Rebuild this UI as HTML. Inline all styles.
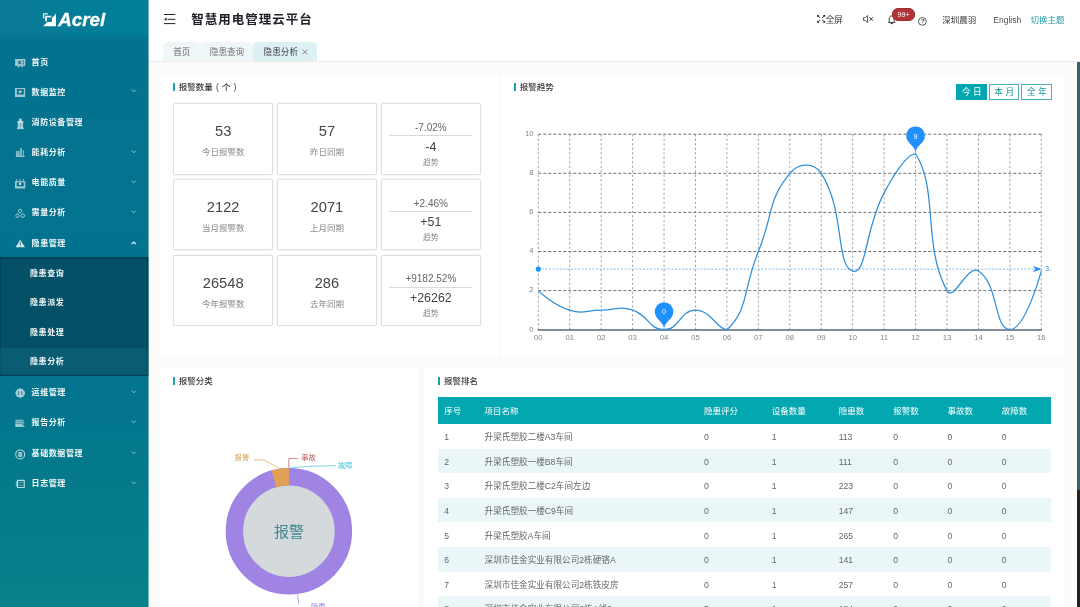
<!DOCTYPE html>
<html lang="zh-CN"><head><meta charset="utf-8"><title>智慧用电管理云平台</title>
<style>
html,body{margin:0;padding:0}
body{width:1080px;height:607px;overflow:hidden;position:relative;background:#fbfbfa;font-family:"Liberation Sans","Noto Sans CJK SC",sans-serif;-webkit-font-smoothing:antialiased}
.t{position:absolute;white-space:nowrap;display:block}
.b{position:absolute;box-sizing:border-box}
svg{position:absolute;overflow:visible}
</style></head><body><div id="app" style="position:absolute;left:0;top:0;width:1080px;height:607px;overflow:hidden;will-change:transform">
<div class="b" id="sidebar" style="left:0;top:0;width:148px;height:607px;background:linear-gradient(180deg,#03728f 0%,#03728f 6%,#02748e 64%,#047b8a 83%,#09818a 100%)">
<div class="b" style="left:0px;top:0px;width:148px;height:40px;background:linear-gradient(90deg,#0a7a96,#007f98);-webkit-mask-image:linear-gradient(180deg,#000 0,#000 78%,transparent 100%);mask-image:linear-gradient(180deg,#000 0,#000 78%,transparent 100%)"></div>
<svg style="left:38px;top:8px" width="40" height="24" viewBox="0 0 1012 607"><path d="M455 140L350 262V352H232L130 462H455Z" fill="#fff"/><path d="M125 130H252V166H160V264H125Z" fill="#fff" opacity="0.85"/><path d="M180 196H336V242H228V336H180Z" fill="#fff" opacity="0.9"/></svg>
<span class="t" style="left:58.2px;top:7.80px;line-height:24px;font-size:18.8px;color:#fff;font-weight:700;font-style:italic;-webkit-text-stroke:0.3px #fff;">Acrel</span>
<span class="t" style="left:31.6px;top:54.75px;line-height:16px;font-size:8.0px;color:rgba(255,255,255,0.95);font-weight:700;letter-spacing:0.58px;">首页</span>
<span class="t" style="left:31.6px;top:84.50px;line-height:16px;font-size:8.0px;color:rgba(255,255,255,0.95);font-weight:700;letter-spacing:0.58px;">数据监控</span>
<svg style="left:131.4px;top:89.4px;opacity:0.6" width="5.4" height="4" viewBox="0 0 5.4 4"><path d="M0.5 0.6L2.7 2.8L4.9 0.6" fill="none" stroke="#fff" stroke-width="1"/></svg>
<span class="t" style="left:31.6px;top:114.65px;line-height:16px;font-size:8.0px;color:rgba(255,255,255,0.95);font-weight:700;letter-spacing:0.58px;">消防设备管理</span>
<span class="t" style="left:31.6px;top:144.80px;line-height:16px;font-size:8.0px;color:rgba(255,255,255,0.95);font-weight:700;letter-spacing:0.58px;">能耗分析</span>
<svg style="left:131.4px;top:149.8px;opacity:0.6" width="5.4" height="4" viewBox="0 0 5.4 4"><path d="M0.5 0.6L2.7 2.8L4.9 0.6" fill="none" stroke="#fff" stroke-width="1"/></svg>
<span class="t" style="left:31.6px;top:174.95px;line-height:16px;font-size:8.0px;color:rgba(255,255,255,0.95);font-weight:700;letter-spacing:0.58px;">电能质量</span>
<svg style="left:131.4px;top:179.9px;opacity:0.6" width="5.4" height="4" viewBox="0 0 5.4 4"><path d="M0.5 0.6L2.7 2.8L4.9 0.6" fill="none" stroke="#fff" stroke-width="1"/></svg>
<span class="t" style="left:31.6px;top:204.95px;line-height:16px;font-size:8.0px;color:rgba(255,255,255,0.95);font-weight:700;letter-spacing:0.58px;">需量分析</span>
<svg style="left:131.4px;top:209.9px;opacity:0.6" width="5.4" height="4" viewBox="0 0 5.4 4"><path d="M0.5 0.6L2.7 2.8L4.9 0.6" fill="none" stroke="#fff" stroke-width="1"/></svg>
<span class="t" style="left:31.6px;top:235.65px;line-height:16px;font-size:8.0px;color:rgba(255,255,255,0.95);font-weight:700;letter-spacing:0.58px;">隐患管理</span>
<svg style="left:131.4px;top:240.6px;opacity:0.95" width="5.4" height="4" viewBox="0 0 5.4 4"><path d="M0.5 3.2L2.7 1L4.9 3.2" fill="none" stroke="#fff" stroke-width="1.1"/></svg>
<span class="t" style="left:31.6px;top:384.65px;line-height:16px;font-size:8.0px;color:rgba(255,255,255,0.95);font-weight:700;letter-spacing:0.58px;">运维管理</span>
<svg style="left:131.4px;top:389.6px;opacity:0.6" width="5.4" height="4" viewBox="0 0 5.4 4"><path d="M0.5 0.6L2.7 2.8L4.9 0.6" fill="none" stroke="#fff" stroke-width="1"/></svg>
<span class="t" style="left:31.6px;top:414.70px;line-height:16px;font-size:8.0px;color:rgba(255,255,255,0.95);font-weight:700;letter-spacing:0.58px;">报告分析</span>
<svg style="left:131.4px;top:419.7px;opacity:0.6" width="5.4" height="4" viewBox="0 0 5.4 4"><path d="M0.5 0.6L2.7 2.8L4.9 0.6" fill="none" stroke="#fff" stroke-width="1"/></svg>
<span class="t" style="left:31.6px;top:445.55px;line-height:16px;font-size:8.0px;color:rgba(255,255,255,0.95);font-weight:700;letter-spacing:0.58px;">基础数据管理</span>
<svg style="left:131.4px;top:450.5px;opacity:0.6" width="5.4" height="4" viewBox="0 0 5.4 4"><path d="M0.5 0.6L2.7 2.8L4.9 0.6" fill="none" stroke="#fff" stroke-width="1"/></svg>
<span class="t" style="left:31.6px;top:475.50px;line-height:16px;font-size:8.0px;color:rgba(255,255,255,0.95);font-weight:700;letter-spacing:0.58px;">日志管理</span>
<svg style="left:131.4px;top:480.5px;opacity:0.6" width="5.4" height="4" viewBox="0 0 5.4 4"><path d="M0.5 0.6L2.7 2.8L4.9 0.6" fill="none" stroke="#fff" stroke-width="1"/></svg>
<svg style="left:0;top:0" width="148" height="607" viewBox="0 0 148 607">
<rect x="15.1" y="59" width="10.2" height="6.9" fill="rgba(255,255,255,0.62)"/><circle cx="19.9" cy="62.4" r="1.9" fill="rgba(3,100,130,0.7)"/><rect x="22.6" y="60.3" width="1.3" height="4.3" fill="rgba(3,100,130,0.7)"/><rect x="21.3" y="61.9" width="1.6" height="1" fill="rgba(255,255,255,0.85)"/><path d="M17.5 65.9L18.6 68L19.7 65.9ZM20.9 65.9L22 68L23.1 65.9Z" fill="rgba(255,255,255,0.62)"/>
<path d="M15 87.9H25.1V96.9H15ZM16.9 89.1V94.4H23.8V89.1Z" fill="rgba(255,255,255,0.62)" fill-rule="evenodd"/><path d="M21.4 89.6L17.9 92.2H19.9L18.9 94.1L22.4 91.4H20.4Z" fill="rgba(255,255,255,0.85)"/>
<ellipse cx="20.4" cy="120.3" rx="1.6" ry="2.1" fill="rgba(255,255,255,0.62)"/><rect x="17.3" y="120.9" width="6.2" height="1.5" rx="0.5" fill="rgba(255,255,255,0.62)"/><rect x="17.6" y="122" width="5.5" height="6" fill="rgba(255,255,255,0.62)"/><rect x="17" y="127.7" width="6.8" height="1.5" fill="rgba(255,255,255,0.62)"/><rect x="20" y="123.2" width="0.7" height="3.4" fill="rgba(3,100,130,0.7)" opacity="0.6"/>
<rect x="15.9" y="150.9" width="3.9" height="5.2" fill="rgba(255,255,255,0.48)"/><rect x="20.1" y="148" width="1.9" height="8.1" fill="rgba(255,255,255,0.48)"/><rect x="22.8" y="150" width="1.2" height="6.1" fill="rgba(255,255,255,0.48)"/><rect x="15.8" y="155.9" width="9" height="1" fill="rgba(255,255,255,0.62)"/>
<path d="M15 181.3H25.3V188.4H15ZM16.7 182.5V186.2H23.8V182.5Z" fill="rgba(255,255,255,0.62)" fill-rule="evenodd"/><rect x="16.1" y="178.9" width="1.2" height="2.6" fill="rgba(255,255,255,0.48)"/><rect x="19.6" y="178.9" width="1.2" height="2.6" fill="rgba(255,255,255,0.48)"/><rect x="22.9" y="178.9" width="1.2" height="2.6" fill="rgba(255,255,255,0.48)"/><rect x="19.1" y="183" width="2" height="1.9" fill="rgba(255,255,255,0.85)"/>
<g fill="none" stroke="rgba(255,255,255,0.7)" stroke-width="0.85"><circle cx="20.1" cy="210.9" r="1.75"/><circle cx="17.6" cy="215.7" r="1.75"/><circle cx="22.8" cy="215.7" r="1.75"/></g>
<path d="M20.2 239.7L25 247.3H15.6Z" fill="rgba(255,255,255,0.85)"/><path d="M20.25 241.8V245" stroke="#2b6f80" stroke-width="0.9"/><circle cx="20.25" cy="246.1" r="0.5" fill="#2b6f80"/>
<ellipse cx="20.2" cy="393.1" rx="4.9" ry="4.5" fill="rgba(255,255,255,0.62)"/><rect x="19.85" y="388" width="0.8" height="10.3" fill="rgba(255,255,255,0.48)"/><rect x="18.15" y="391.2" width="1.05" height="3.9" fill="rgba(3,100,130,0.7)"/><rect x="21.15" y="391.2" width="1.05" height="3.9" fill="rgba(3,100,130,0.7)"/>
<path d="M15.3 419.5H23.2L24.7 424.2H15.3Z" fill="rgba(255,255,255,0.3)"/><path d="M15.6 420.6H22.6M15.6 422.5H23.2" stroke="rgba(255,255,255,0.5)" stroke-width="0.9" stroke-dasharray="1.3 0.7"/><rect x="15.3" y="424.1" width="6.8" height="2.9" fill="rgba(255,255,255,0.62)"/><path d="M22.4 427V423.8L24.9 427Z" fill="rgba(255,255,255,0.62)"/>
<circle cx="20.2" cy="454.4" r="4.45" fill="none" stroke="rgba(255,255,255,0.7)" stroke-width="1.1"/><rect x="18.2" y="451.9" width="4" height="5" rx="0.9" fill="rgba(255,255,255,0.62)"/><rect x="18.2" y="454.2" width="4" height="0.5" fill="rgba(3,100,130,0.7)" opacity="0.6"/>
<path d="M17 479.8H24.8V488H17ZM18.1 480.9V486.9H23.7V480.9Z" fill="rgba(255,255,255,0.72)" fill-rule="evenodd"/><rect x="15.8" y="481" width="1.3" height="5.6" fill="rgba(255,255,255,0.48)"/><rect x="18.6" y="482" width="4.8" height="0.7" fill="rgba(255,255,255,0.48)"/><rect x="18.6" y="484.8" width="4.8" height="0.7" fill="rgba(255,255,255,0.48)"/>
</svg>
<div class="b" style="left:0px;top:257px;width:148px;height:118.5px;background:rgba(5,40,60,0.47);box-shadow:inset 0 1.5px 2px rgba(0,30,40,0.35),inset 0 -1.5px 2px rgba(0,30,40,0.35)"></div>
<div class="b" style="left:0px;top:348.4px;width:148px;height:27.1px;background:rgba(50,160,180,0.15)"></div>
<span class="t" style="left:30.0px;top:265.55px;line-height:16px;font-size:8.0px;color:rgba(255,255,255,0.95);font-weight:700;letter-spacing:0.58px;">隐患查询</span>
<span class="t" style="left:30.0px;top:294.75px;line-height:16px;font-size:8.0px;color:rgba(255,255,255,0.95);font-weight:700;letter-spacing:0.58px;">隐患派发</span>
<span class="t" style="left:30.0px;top:324.65px;line-height:16px;font-size:8.0px;color:rgba(255,255,255,0.95);font-weight:700;letter-spacing:0.58px;">隐患处理</span>
<span class="t" style="left:30.0px;top:353.90px;line-height:16px;font-size:8.0px;color:rgba(255,255,255,0.95);font-weight:700;letter-spacing:0.58px;">隐患分析</span>
</div>
<div class="b" style="left:148px;top:0px;width:932px;height:37px;background:#fff"></div>
<svg style="left:163.7px;top:14px" width="12" height="10" viewBox="0 0 12 10"><path d="M0 0.5H11.3M3.5 5.3H11.3M0 9.6H11.3" stroke="#222" stroke-width="1"/><path d="M0 5.3L2.5 3.6V7Z" fill="#222"/></svg>
<span class="t" style="left:191.3px;top:9.60px;line-height:20px;font-size:12.5px;color:#20222a;font-weight:700;letter-spacing:1.0px;">智慧用电管理云平台</span>
<svg style="left:816.5px;top:15.4px" width="8.2" height="7.7" viewBox="0 0 8.4 8"><path d="M0.7 0.7L3.1 3M7.7 0.7L5.3 3M0.7 7.3L3.1 5M7.7 7.3L5.3 5" stroke="#222" stroke-width="1"/><path d="M0 0H2.4L0 2.4ZM8.4 0H6L8.4 2.4ZM0 8H2.4L0 5.6ZM8.4 8H6L8.4 5.6Z" fill="#222"/></svg>
<span class="t" style="left:825.7px;top:11.60px;line-height:16px;font-size:8.6px;color:#333;">全屏</span>
<svg style="left:863px;top:15px" width="10.5" height="8" viewBox="0 0 10.5 8"><path d="M0.5 2.6H2.2L4.6 0.5V7.5L2.2 5.4H0.5Z" fill="none" stroke="#333" stroke-width="0.8" stroke-linejoin="round"/><path d="M6.6 2.3L9.9 5.7M9.9 2.3L6.6 5.7" stroke="#2a2a2a" stroke-width="0.95"/></svg>
<svg style="left:888.1px;top:14.6px" width="7.4" height="9.6" viewBox="0 0 7.4 9.6"><path d="M0.5 7.4C1.4 6.4 1.2 5.4 1.3 3.6C1.4 2 2.4 0.9 3.7 0.9C5 0.9 6 2 6.1 3.6C6.2 5.4 6 6.4 6.9 7.4Z" fill="none" stroke="#222" stroke-width="0.9" stroke-linejoin="round"/><path d="M2.6 8.6H4.8" stroke="#222" stroke-width="1"/></svg>
<div class="b" style="left:892px;top:7.8px;width:23px;height:13.6px;background:#b2323a;border-radius:7px;box-shadow:inset 0 0 0 0.6px #93292f"></div>
<span class="t" style="left:903.5px;top:7.30px;line-height:16px;font-size:7.2px;color:#fff;transform:translateX(-50%);">99+</span>
<svg style="left:918.4px;top:16.7px" width="8.8" height="8.8" viewBox="0 0 8.8 8.8"><circle cx="4.4" cy="4.4" r="3.9" fill="none" stroke="#333" stroke-width="0.8"/></svg>
<span class="t" style="left:922.8px;top:13.20px;line-height:16px;font-size:6.2px;color:#333;font-weight:700;transform:translateX(-50%);">?</span>
<span class="t" style="left:942.3px;top:11.60px;line-height:16px;font-size:8.5px;color:#333;">深圳晨羽</span>
<span class="t" style="left:993.3px;top:11.60px;line-height:16px;font-size:8.5px;color:#505050;">English</span>
<span class="t" style="left:1030.6px;top:11.60px;line-height:16px;font-size:8.5px;color:#1f9aa3;">切换主题</span>
<div class="b" style="left:148px;top:37px;width:932px;height:24.6px;background:#fff;border-bottom:1px solid #ececec"></div>
<div class="b" style="left:163.2px;top:42px;width:36.5px;height:19.2px;background:#eef6f8;border-radius:4.5px 4.5px 0 0"></div>
<div class="b" style="left:199.7px;top:42px;width:53.8px;height:19.2px;background:#eef6f8;border-radius:4.5px 4.5px 0 0"></div>
<div class="b" style="left:253.3px;top:41.8px;width:63.5px;height:19.4px;background:#ddf0f3;border-radius:4.5px 4.5px 0 0"></div>
<span class="t" style="left:173.2px;top:43.90px;line-height:16px;font-size:8.6px;color:#666;">首页</span>
<span class="t" style="left:209.8px;top:43.90px;line-height:16px;font-size:8.6px;color:#727272;">隐患查询</span>
<span class="t" style="left:263.6px;top:43.90px;line-height:16px;font-size:8.6px;color:#444;">隐患分析</span>
<svg style="left:302.3px;top:49.2px" width="5.9" height="5.7" viewBox="0 0 5.4 5.4"><path d="M0.4 0.4L5 5M5 0.4L0.4 5" stroke="#666" stroke-width="0.7"/></svg>
<div class="b" style="left:161px;top:74px;width:337.5px;height:284.3px;background:#fff"></div>
<div class="b" style="left:501px;top:74px;width:563.5px;height:284.3px;background:#fff"></div>
<div class="b" style="left:161px;top:366.8px;width:257.3px;height:245px;background:#fff"></div>
<div class="b" style="left:425.4px;top:366.8px;width:639.1px;height:245px;background:#fff"></div>
<div class="b" style="left:172.8px;top:83.3px;width:1.9px;height:8px;background:#1aa3ab"></div>
<span class="t" style="left:178.8px;top:79.30px;line-height:16px;font-size:8.5px;color:#3a3a3a;font-weight:500;word-spacing:0.8px;">报警数量 ( 个 )</span>
<div class="b" style="left:513.8px;top:83.3px;width:1.9px;height:8px;background:#1aa3ab"></div>
<span class="t" style="left:519.8px;top:79.30px;line-height:16px;font-size:8.5px;color:#3a3a3a;font-weight:500;word-spacing:0.8px;">报警趋势</span>
<div class="b" style="left:172.8px;top:376.7px;width:1.9px;height:8px;background:#1aa3ab"></div>
<span class="t" style="left:178.8px;top:372.70px;line-height:16px;font-size:8.5px;color:#3a3a3a;font-weight:500;word-spacing:0.8px;">报警分类</span>
<div class="b" style="left:438.1px;top:376.7px;width:1.9px;height:8px;background:#1aa3ab"></div>
<span class="t" style="left:444.1px;top:372.70px;line-height:16px;font-size:8.5px;color:#3a3a3a;font-weight:500;word-spacing:0.8px;">报警排名</span>
<div class="b" style="left:173.3px;top:103.4px;width:99.7px;height:71.2px;border:1px solid #dfdfdf;border-radius:1.5px;background:#fff;box-shadow:0 0 1.5px rgba(0,0,0,0.12)"></div>
<span class="t" style="left:223.15px;top:121.10px;line-height:20px;font-size:14.7px;color:#454545;transform:translateX(-50%);">53</span>
<span class="t" style="left:223.15px;top:144.00px;line-height:16px;font-size:8.5px;color:#888;transform:translateX(-50%);">今日报警数</span>
<div class="b" style="left:277.1px;top:103.4px;width:99.7px;height:71.2px;border:1px solid #dfdfdf;border-radius:1.5px;background:#fff;box-shadow:0 0 1.5px rgba(0,0,0,0.12)"></div>
<span class="t" style="left:326.95000000000005px;top:121.10px;line-height:20px;font-size:14.7px;color:#454545;transform:translateX(-50%);">57</span>
<span class="t" style="left:326.95000000000005px;top:144.00px;line-height:16px;font-size:8.5px;color:#888;transform:translateX(-50%);">昨日同期</span>
<div class="b" style="left:381.0px;top:103.4px;width:99.7px;height:71.2px;border:1px solid #dfdfdf;border-radius:1.5px;background:#fff;box-shadow:0 0 1.5px rgba(0,0,0,0.12)"></div>
<span class="t" style="left:430.85px;top:119.80px;line-height:16px;font-size:10px;color:#666;transform:translateX(-50%);">-7.02%</span>
<div class="b" style="left:389.3px;top:135.0px;width:82.4px;height:0.8px;background:#d9d9d9"></div>
<span class="t" style="left:430.85px;top:137.60px;line-height:18px;font-size:12.4px;color:#424242;transform:translateX(-50%);">-4</span>
<span class="t" style="left:430.85px;top:154.60px;line-height:16px;font-size:7.8px;color:#888;transform:translateX(-50%);">趋势</span>
<div class="b" style="left:173.3px;top:179.2px;width:99.7px;height:71.2px;border:1px solid #dfdfdf;border-radius:1.5px;background:#fff;box-shadow:0 0 1.5px rgba(0,0,0,0.12)"></div>
<span class="t" style="left:223.15px;top:196.90px;line-height:20px;font-size:14.7px;color:#454545;transform:translateX(-50%);">2122</span>
<span class="t" style="left:223.15px;top:219.80px;line-height:16px;font-size:8.5px;color:#888;transform:translateX(-50%);">当月报警数</span>
<div class="b" style="left:277.1px;top:179.2px;width:99.7px;height:71.2px;border:1px solid #dfdfdf;border-radius:1.5px;background:#fff;box-shadow:0 0 1.5px rgba(0,0,0,0.12)"></div>
<span class="t" style="left:326.95000000000005px;top:196.90px;line-height:20px;font-size:14.7px;color:#454545;transform:translateX(-50%);">2071</span>
<span class="t" style="left:326.95000000000005px;top:219.80px;line-height:16px;font-size:8.5px;color:#888;transform:translateX(-50%);">上月同期</span>
<div class="b" style="left:381.0px;top:179.2px;width:99.7px;height:71.2px;border:1px solid #dfdfdf;border-radius:1.5px;background:#fff;box-shadow:0 0 1.5px rgba(0,0,0,0.12)"></div>
<span class="t" style="left:430.85px;top:195.60px;line-height:16px;font-size:10px;color:#666;transform:translateX(-50%);">+2.46%</span>
<div class="b" style="left:389.3px;top:210.79999999999998px;width:82.4px;height:0.8px;background:#d9d9d9"></div>
<span class="t" style="left:430.85px;top:213.40px;line-height:18px;font-size:12.4px;color:#424242;transform:translateX(-50%);">+51</span>
<span class="t" style="left:430.85px;top:230.40px;line-height:16px;font-size:7.8px;color:#888;transform:translateX(-50%);">趋势</span>
<div class="b" style="left:173.3px;top:255.0px;width:99.7px;height:71.2px;border:1px solid #dfdfdf;border-radius:1.5px;background:#fff;box-shadow:0 0 1.5px rgba(0,0,0,0.12)"></div>
<span class="t" style="left:223.15px;top:272.70px;line-height:20px;font-size:14.7px;color:#454545;transform:translateX(-50%);">26548</span>
<span class="t" style="left:223.15px;top:295.60px;line-height:16px;font-size:8.5px;color:#888;transform:translateX(-50%);">今年报警数</span>
<div class="b" style="left:277.1px;top:255.0px;width:99.7px;height:71.2px;border:1px solid #dfdfdf;border-radius:1.5px;background:#fff;box-shadow:0 0 1.5px rgba(0,0,0,0.12)"></div>
<span class="t" style="left:326.95000000000005px;top:272.70px;line-height:20px;font-size:14.7px;color:#454545;transform:translateX(-50%);">286</span>
<span class="t" style="left:326.95000000000005px;top:295.60px;line-height:16px;font-size:8.5px;color:#888;transform:translateX(-50%);">去年同期</span>
<div class="b" style="left:381.0px;top:255.0px;width:99.7px;height:71.2px;border:1px solid #dfdfdf;border-radius:1.5px;background:#fff;box-shadow:0 0 1.5px rgba(0,0,0,0.12)"></div>
<span class="t" style="left:430.85px;top:271.40px;line-height:16px;font-size:10px;color:#666;transform:translateX(-50%);">+9182.52%</span>
<div class="b" style="left:389.3px;top:286.6px;width:82.4px;height:0.8px;background:#d9d9d9"></div>
<span class="t" style="left:430.85px;top:289.20px;line-height:18px;font-size:12.4px;color:#424242;transform:translateX(-50%);">+26262</span>
<span class="t" style="left:430.85px;top:306.20px;line-height:16px;font-size:7.8px;color:#888;transform:translateX(-50%);">趋势</span>
<div class="b" style="left:956px;top:84px;width:30.8px;height:15.6px;background:#03a7b0"></div>
<div class="b" style="left:989px;top:84px;width:30px;height:15.6px;border:1px solid #4fb0b7;background:#fff"></div>
<div class="b" style="left:1021.4px;top:84px;width:30.6px;height:15.6px;border:1px solid #4fb0b7;background:#fff"></div>
<span class="t" style="left:971.8px;top:84.20px;line-height:16px;font-size:8.6px;color:#fff;letter-spacing:2.6px;transform:translateX(-50%);padding-left:2.6px;">今日</span>
<span class="t" style="left:1004.2px;top:84.20px;line-height:16px;font-size:8.6px;color:#1f9aa3;letter-spacing:2.6px;transform:translateX(-50%);padding-left:2.6px;">本月</span>
<span class="t" style="left:1036.9px;top:84.20px;line-height:16px;font-size:8.6px;color:#1f9aa3;letter-spacing:2.6px;transform:translateX(-50%);padding-left:2.6px;">全年</span>
<svg style="left:0;top:0" width="1080" height="607" viewBox="0 0 1080 607">
<path d="M538.3 290.60H1041.3M538.3 251.50H1041.3M538.3 212.40H1041.3M538.3 173.30H1041.3M538.3 134.20H1041.3" stroke="#4a4a4a" stroke-width="0.8" stroke-dasharray="3 2" fill="none"/>
<path d="M538.30 134.2V329.7M569.74 134.2V329.7M601.17 134.2V329.7M632.61 134.2V329.7M664.05 134.2V329.7M695.49 134.2V329.7M726.92 134.2V329.7M758.36 134.2V329.7M789.80 134.2V329.7M821.24 134.2V329.7M852.67 134.2V329.7M884.11 134.2V329.7M915.55 134.2V329.7M946.99 134.2V329.7M978.42 134.2V329.7M1009.86 134.2V329.7M1041.30 134.2V329.7" stroke="#7e838c" stroke-width="0.75" stroke-dasharray="2.2 2.3" fill="none"/>
<path d="M537.8 330.0H1041.8" stroke="#5a6377" stroke-width="1.5" fill="none"/>
<path d="M538.3 269.10H1035.3" stroke="#4a9be0" stroke-width="0.7" stroke-dasharray="2 1.6" fill="none"/>
<circle cx="538.3" cy="269.10" r="2.6" fill="#1e90ff"/>
<path d="M1041.8 269.10L1032.8 265.90L1035.3 269.10L1032.8 272.30Z" fill="#1e90ff"/>
<path d="M538.30 290.60C538.30 290.60 552.74 304.86 569.74 310.15C584.17 314.64 585.46 310.15 601.17 310.15C616.89 310.15 618.18 305.66 632.61 310.15C649.61 315.44 648.33 329.70 664.05 329.70C679.77 329.70 679.77 310.15 695.49 310.15C711.21 310.15 717.33 329.70 726.92 329.70C748.77 309.32 742.64 290.60 758.36 251.50C774.08 212.40 766.90 201.78 789.80 173.30C798.34 162.68 813.87 161.84 821.24 173.30C845.31 210.72 835.41 265.68 852.67 271.05C866.85 275.46 864.41 229.61 884.11 192.85C895.84 170.96 907.27 153.75 915.55 153.75C938.71 189.76 922.11 244.19 946.99 290.60C953.55 302.84 967.19 264.06 978.42 271.05C998.62 283.61 994.14 329.70 1009.86 329.70C1025.58 329.70 1041.30 271.05 1041.30 271.05" stroke="#2f8fdc" stroke-width="1.25" fill="none" stroke-linejoin="round"/>
<path d="M907.15 139.72A9.30 9.30 0 1 1 923.95 139.72C921.56 144.76 915.55 146.94 915.55 153.45C915.55 146.94 909.54 144.76 907.15 139.72Z" fill="#1e90ff"/>
<path d="M655.65 315.67A9.30 9.30 0 1 1 672.45 315.67C670.06 320.71 664.05 322.89 664.05 329.40C664.05 322.89 658.04 320.71 655.65 315.67Z" fill="#1e90ff"/>
</svg>
<span class="t" style="left:915.55px;top:128.54px;line-height:16px;font-size:7.2px;color:#fff;transform:translateX(-50%);">9</span>
<span class="t" style="left:664.05px;top:304.49px;line-height:16px;font-size:7.2px;color:#fff;transform:translateX(-50%);">0</span>
<span class="t" style="left:1045.3px;top:261.10px;line-height:16px;font-size:6.8px;color:#2f8fdc;">3.</span>
<span class="t" style="left:533.5px;top:321.50px;line-height:16px;font-size:7.7px;color:#858585;transform:translateX(-100%);">0</span>
<span class="t" style="left:533.5px;top:282.40px;line-height:16px;font-size:7.7px;color:#858585;transform:translateX(-100%);">2</span>
<span class="t" style="left:533.5px;top:243.30px;line-height:16px;font-size:7.7px;color:#858585;transform:translateX(-100%);">4</span>
<span class="t" style="left:533.5px;top:204.20px;line-height:16px;font-size:7.7px;color:#858585;transform:translateX(-100%);">6</span>
<span class="t" style="left:533.5px;top:165.10px;line-height:16px;font-size:7.7px;color:#858585;transform:translateX(-100%);">8</span>
<span class="t" style="left:533.5px;top:126.00px;line-height:16px;font-size:7.7px;color:#858585;transform:translateX(-100%);">10</span>
<span class="t" style="left:538.3px;top:329.60px;line-height:16px;font-size:7.7px;color:#858585;transform:translateX(-50%);">00</span>
<span class="t" style="left:569.7375px;top:329.60px;line-height:16px;font-size:7.7px;color:#858585;transform:translateX(-50%);">01</span>
<span class="t" style="left:601.175px;top:329.60px;line-height:16px;font-size:7.7px;color:#858585;transform:translateX(-50%);">02</span>
<span class="t" style="left:632.6125px;top:329.60px;line-height:16px;font-size:7.7px;color:#858585;transform:translateX(-50%);">03</span>
<span class="t" style="left:664.05px;top:329.60px;line-height:16px;font-size:7.7px;color:#858585;transform:translateX(-50%);">04</span>
<span class="t" style="left:695.4875px;top:329.60px;line-height:16px;font-size:7.7px;color:#858585;transform:translateX(-50%);">05</span>
<span class="t" style="left:726.925px;top:329.60px;line-height:16px;font-size:7.7px;color:#858585;transform:translateX(-50%);">06</span>
<span class="t" style="left:758.3625px;top:329.60px;line-height:16px;font-size:7.7px;color:#858585;transform:translateX(-50%);">07</span>
<span class="t" style="left:789.8px;top:329.60px;line-height:16px;font-size:7.7px;color:#858585;transform:translateX(-50%);">08</span>
<span class="t" style="left:821.2375px;top:329.60px;line-height:16px;font-size:7.7px;color:#858585;transform:translateX(-50%);">09</span>
<span class="t" style="left:852.675px;top:329.60px;line-height:16px;font-size:7.7px;color:#858585;transform:translateX(-50%);">10</span>
<span class="t" style="left:884.1125px;top:329.60px;line-height:16px;font-size:7.7px;color:#858585;transform:translateX(-50%);">11</span>
<span class="t" style="left:915.55px;top:329.60px;line-height:16px;font-size:7.7px;color:#858585;transform:translateX(-50%);">12</span>
<span class="t" style="left:946.9875px;top:329.60px;line-height:16px;font-size:7.7px;color:#858585;transform:translateX(-50%);">13</span>
<span class="t" style="left:978.425px;top:329.60px;line-height:16px;font-size:7.7px;color:#858585;transform:translateX(-50%);">14</span>
<span class="t" style="left:1009.8625px;top:329.60px;line-height:16px;font-size:7.7px;color:#858585;transform:translateX(-50%);">15</span>
<span class="t" style="left:1041.3px;top:329.60px;line-height:16px;font-size:7.7px;color:#858585;transform:translateX(-50%);">16</span>
<svg style="left:0;top:0" width="1080" height="607" viewBox="0 0 1080 607">
<circle cx="288.9" cy="531.2" r="46.199999999999996" fill="#d4d9db"/>
<circle cx="288.9" cy="531.2" r="54.5" fill="none" stroke="#a084e3" stroke-width="17.400000000000006"/>
<path d="M271.48 470.45A63.2 63.2 0 0 1 288.90 468.00L288.90 485.40A45.8 45.8 0 0 0 276.28 487.17Z" fill="#e2a057"/>
<path d="M280.10 468.62L263.60 459.92H254.10" stroke="#d9a253" stroke-width="0.7" fill="none"/>
<path d="M288.9 468.00000000000006V458.50000000000006H297.9" stroke="#b65c5c" stroke-width="0.7" fill="none"/>
<path d="M289.7 468.00000000000006L309.9 466.30000000000007L335.9 465.6000000000001" stroke="#45c3d6" stroke-width="0.7" fill="none"/>
<path d="M297.70 593.78L298.70 603.78" stroke="#a084e3" stroke-width="0.7" fill="none"/>
</svg>
<span class="t" style="left:288.9px;top:520.80px;line-height:22px;font-size:15px;color:#41858d;transform:translateX(-50%);">报警</span>
<span class="t" style="left:249.2px;top:450.40px;line-height:16px;font-size:7.3px;color:#d9a253;transform:translateX(-100%);">报警</span>
<span class="t" style="left:301.2px;top:449.60px;line-height:16px;font-size:7.3px;color:#b65c5c;">事故</span>
<span class="t" style="left:338px;top:458.00px;line-height:16px;font-size:7.3px;color:#45c3d6;">故障</span>
<span class="t" style="left:311px;top:598.50px;line-height:16px;font-size:7.3px;color:#a084e3;">隐患</span>
<div class="b" style="left:438.4px;top:396.9px;width:612.9px;height:27.1px;background:#03a7b0"></div>
<span class="t" style="left:444.2px;top:402.80px;line-height:16px;font-size:8.5px;color:#fff;">序号</span>
<span class="t" style="left:484.6px;top:402.80px;line-height:16px;font-size:8.5px;color:#fff;">项目名称</span>
<span class="t" style="left:704.1px;top:402.80px;line-height:16px;font-size:8.5px;color:#fff;">隐患评分</span>
<span class="t" style="left:771.7px;top:402.80px;line-height:16px;font-size:8.5px;color:#fff;">设备数量</span>
<span class="t" style="left:838.7px;top:402.80px;line-height:16px;font-size:8.5px;color:#fff;">隐患数</span>
<span class="t" style="left:893.3px;top:402.80px;line-height:16px;font-size:8.5px;color:#fff;">报警数</span>
<span class="t" style="left:947.6px;top:402.80px;line-height:16px;font-size:8.5px;color:#fff;">事故数</span>
<span class="t" style="left:1001.8px;top:402.80px;line-height:16px;font-size:8.5px;color:#fff;">故障数</span>
<div class="b" style="left:438.4px;top:424.0px;width:612.9px;height:24.62px;background:#fff"></div>
<span class="t" style="left:444.2px;top:429.11px;line-height:16px;font-size:8.62px;color:#666;">1</span>
<span class="t" style="left:484.6px;top:429.11px;line-height:16px;font-size:8.62px;color:#666;">升梁氏塑胶二楼A3车间</span>
<span class="t" style="left:704.1px;top:429.11px;line-height:16px;font-size:8.62px;color:#666;">0</span>
<span class="t" style="left:771.7px;top:429.11px;line-height:16px;font-size:8.62px;color:#666;">1</span>
<span class="t" style="left:838.7px;top:429.11px;line-height:16px;font-size:8.62px;color:#666;">113</span>
<span class="t" style="left:893.3px;top:429.11px;line-height:16px;font-size:8.62px;color:#666;">0</span>
<span class="t" style="left:947.6px;top:429.11px;line-height:16px;font-size:8.62px;color:#666;">0</span>
<span class="t" style="left:1001.8px;top:429.11px;line-height:16px;font-size:8.62px;color:#666;">0</span>
<div class="b" style="left:438.4px;top:448.62px;width:612.9px;height:24.62px;background:#eaf6f8"></div>
<span class="t" style="left:444.2px;top:453.73px;line-height:16px;font-size:8.62px;color:#666;">2</span>
<span class="t" style="left:484.6px;top:453.73px;line-height:16px;font-size:8.62px;color:#666;">升梁氏塑胶一楼B8车间</span>
<span class="t" style="left:704.1px;top:453.73px;line-height:16px;font-size:8.62px;color:#666;">0</span>
<span class="t" style="left:771.7px;top:453.73px;line-height:16px;font-size:8.62px;color:#666;">1</span>
<span class="t" style="left:838.7px;top:453.73px;line-height:16px;font-size:8.62px;color:#666;">111</span>
<span class="t" style="left:893.3px;top:453.73px;line-height:16px;font-size:8.62px;color:#666;">0</span>
<span class="t" style="left:947.6px;top:453.73px;line-height:16px;font-size:8.62px;color:#666;">0</span>
<span class="t" style="left:1001.8px;top:453.73px;line-height:16px;font-size:8.62px;color:#666;">0</span>
<div class="b" style="left:438.4px;top:473.24px;width:612.9px;height:24.62px;background:#fff"></div>
<span class="t" style="left:444.2px;top:478.35px;line-height:16px;font-size:8.62px;color:#666;">3</span>
<span class="t" style="left:484.6px;top:478.35px;line-height:16px;font-size:8.62px;color:#666;">升梁氏塑胶二楼C2车间左边</span>
<span class="t" style="left:704.1px;top:478.35px;line-height:16px;font-size:8.62px;color:#666;">0</span>
<span class="t" style="left:771.7px;top:478.35px;line-height:16px;font-size:8.62px;color:#666;">1</span>
<span class="t" style="left:838.7px;top:478.35px;line-height:16px;font-size:8.62px;color:#666;">223</span>
<span class="t" style="left:893.3px;top:478.35px;line-height:16px;font-size:8.62px;color:#666;">0</span>
<span class="t" style="left:947.6px;top:478.35px;line-height:16px;font-size:8.62px;color:#666;">0</span>
<span class="t" style="left:1001.8px;top:478.35px;line-height:16px;font-size:8.62px;color:#666;">0</span>
<div class="b" style="left:438.4px;top:497.86px;width:612.9px;height:24.62px;background:#eaf6f8"></div>
<span class="t" style="left:444.2px;top:502.97px;line-height:16px;font-size:8.62px;color:#666;">4</span>
<span class="t" style="left:484.6px;top:502.97px;line-height:16px;font-size:8.62px;color:#666;">升梁氏塑胶一楼C9车间</span>
<span class="t" style="left:704.1px;top:502.97px;line-height:16px;font-size:8.62px;color:#666;">0</span>
<span class="t" style="left:771.7px;top:502.97px;line-height:16px;font-size:8.62px;color:#666;">1</span>
<span class="t" style="left:838.7px;top:502.97px;line-height:16px;font-size:8.62px;color:#666;">147</span>
<span class="t" style="left:893.3px;top:502.97px;line-height:16px;font-size:8.62px;color:#666;">0</span>
<span class="t" style="left:947.6px;top:502.97px;line-height:16px;font-size:8.62px;color:#666;">0</span>
<span class="t" style="left:1001.8px;top:502.97px;line-height:16px;font-size:8.62px;color:#666;">0</span>
<div class="b" style="left:438.4px;top:522.48px;width:612.9px;height:24.62px;background:#fff"></div>
<span class="t" style="left:444.2px;top:527.59px;line-height:16px;font-size:8.62px;color:#666;">5</span>
<span class="t" style="left:484.6px;top:527.59px;line-height:16px;font-size:8.62px;color:#666;">升梁氏塑胶A车间</span>
<span class="t" style="left:704.1px;top:527.59px;line-height:16px;font-size:8.62px;color:#666;">0</span>
<span class="t" style="left:771.7px;top:527.59px;line-height:16px;font-size:8.62px;color:#666;">1</span>
<span class="t" style="left:838.7px;top:527.59px;line-height:16px;font-size:8.62px;color:#666;">265</span>
<span class="t" style="left:893.3px;top:527.59px;line-height:16px;font-size:8.62px;color:#666;">0</span>
<span class="t" style="left:947.6px;top:527.59px;line-height:16px;font-size:8.62px;color:#666;">0</span>
<span class="t" style="left:1001.8px;top:527.59px;line-height:16px;font-size:8.62px;color:#666;">0</span>
<div class="b" style="left:438.4px;top:547.1px;width:612.9px;height:24.62px;background:#eaf6f8"></div>
<span class="t" style="left:444.2px;top:552.21px;line-height:16px;font-size:8.62px;color:#666;">6</span>
<span class="t" style="left:484.6px;top:552.21px;line-height:16px;font-size:8.62px;color:#666;">深圳市佳金实业有限公司2栋硬铬A</span>
<span class="t" style="left:704.1px;top:552.21px;line-height:16px;font-size:8.62px;color:#666;">0</span>
<span class="t" style="left:771.7px;top:552.21px;line-height:16px;font-size:8.62px;color:#666;">1</span>
<span class="t" style="left:838.7px;top:552.21px;line-height:16px;font-size:8.62px;color:#666;">141</span>
<span class="t" style="left:893.3px;top:552.21px;line-height:16px;font-size:8.62px;color:#666;">0</span>
<span class="t" style="left:947.6px;top:552.21px;line-height:16px;font-size:8.62px;color:#666;">0</span>
<span class="t" style="left:1001.8px;top:552.21px;line-height:16px;font-size:8.62px;color:#666;">0</span>
<div class="b" style="left:438.4px;top:571.72px;width:612.9px;height:24.62px;background:#fff"></div>
<span class="t" style="left:444.2px;top:576.83px;line-height:16px;font-size:8.62px;color:#666;">7</span>
<span class="t" style="left:484.6px;top:576.83px;line-height:16px;font-size:8.62px;color:#666;">深圳市佳金实业有限公司2栋铁皮房</span>
<span class="t" style="left:704.1px;top:576.83px;line-height:16px;font-size:8.62px;color:#666;">0</span>
<span class="t" style="left:771.7px;top:576.83px;line-height:16px;font-size:8.62px;color:#666;">1</span>
<span class="t" style="left:838.7px;top:576.83px;line-height:16px;font-size:8.62px;color:#666;">257</span>
<span class="t" style="left:893.3px;top:576.83px;line-height:16px;font-size:8.62px;color:#666;">0</span>
<span class="t" style="left:947.6px;top:576.83px;line-height:16px;font-size:8.62px;color:#666;">0</span>
<span class="t" style="left:1001.8px;top:576.83px;line-height:16px;font-size:8.62px;color:#666;">0</span>
<div class="b" style="left:438.4px;top:596.34px;width:612.9px;height:24.62px;background:#eaf6f8"></div>
<span class="t" style="left:444.2px;top:601.45px;line-height:16px;font-size:8.62px;color:#666;">8</span>
<span class="t" style="left:484.6px;top:601.45px;line-height:16px;font-size:8.62px;color:#666;">深圳市佳金实业有限公司2栋A线2</span>
<span class="t" style="left:704.1px;top:601.45px;line-height:16px;font-size:8.62px;color:#666;">5</span>
<span class="t" style="left:771.7px;top:601.45px;line-height:16px;font-size:8.62px;color:#666;">1</span>
<span class="t" style="left:838.7px;top:601.45px;line-height:16px;font-size:8.62px;color:#666;">184</span>
<span class="t" style="left:893.3px;top:601.45px;line-height:16px;font-size:8.62px;color:#666;">0</span>
<span class="t" style="left:947.6px;top:601.45px;line-height:16px;font-size:8.62px;color:#666;">0</span>
<span class="t" style="left:1001.8px;top:601.45px;line-height:16px;font-size:8.62px;color:#666;">0</span>
<div class="b" style="left:148px;top:0px;width:1px;height:607px;background:linear-gradient(180deg,#03728f 0%,#02748e 64%,#047b8a 83%,#09818a 100%);opacity:0.55"></div>
<div class="b" style="left:148px;top:257px;width:1px;height:118.5px;background:rgba(5,40,60,0.3)"></div>
<div class="b" style="left:1076.5px;top:61.6px;width:3.5px;height:428.4px;background:#3b6266"></div>
<div class="b" style="left:1076.5px;top:490px;width:3.5px;height:117px;background:#222"></div>
</div></body></html>
